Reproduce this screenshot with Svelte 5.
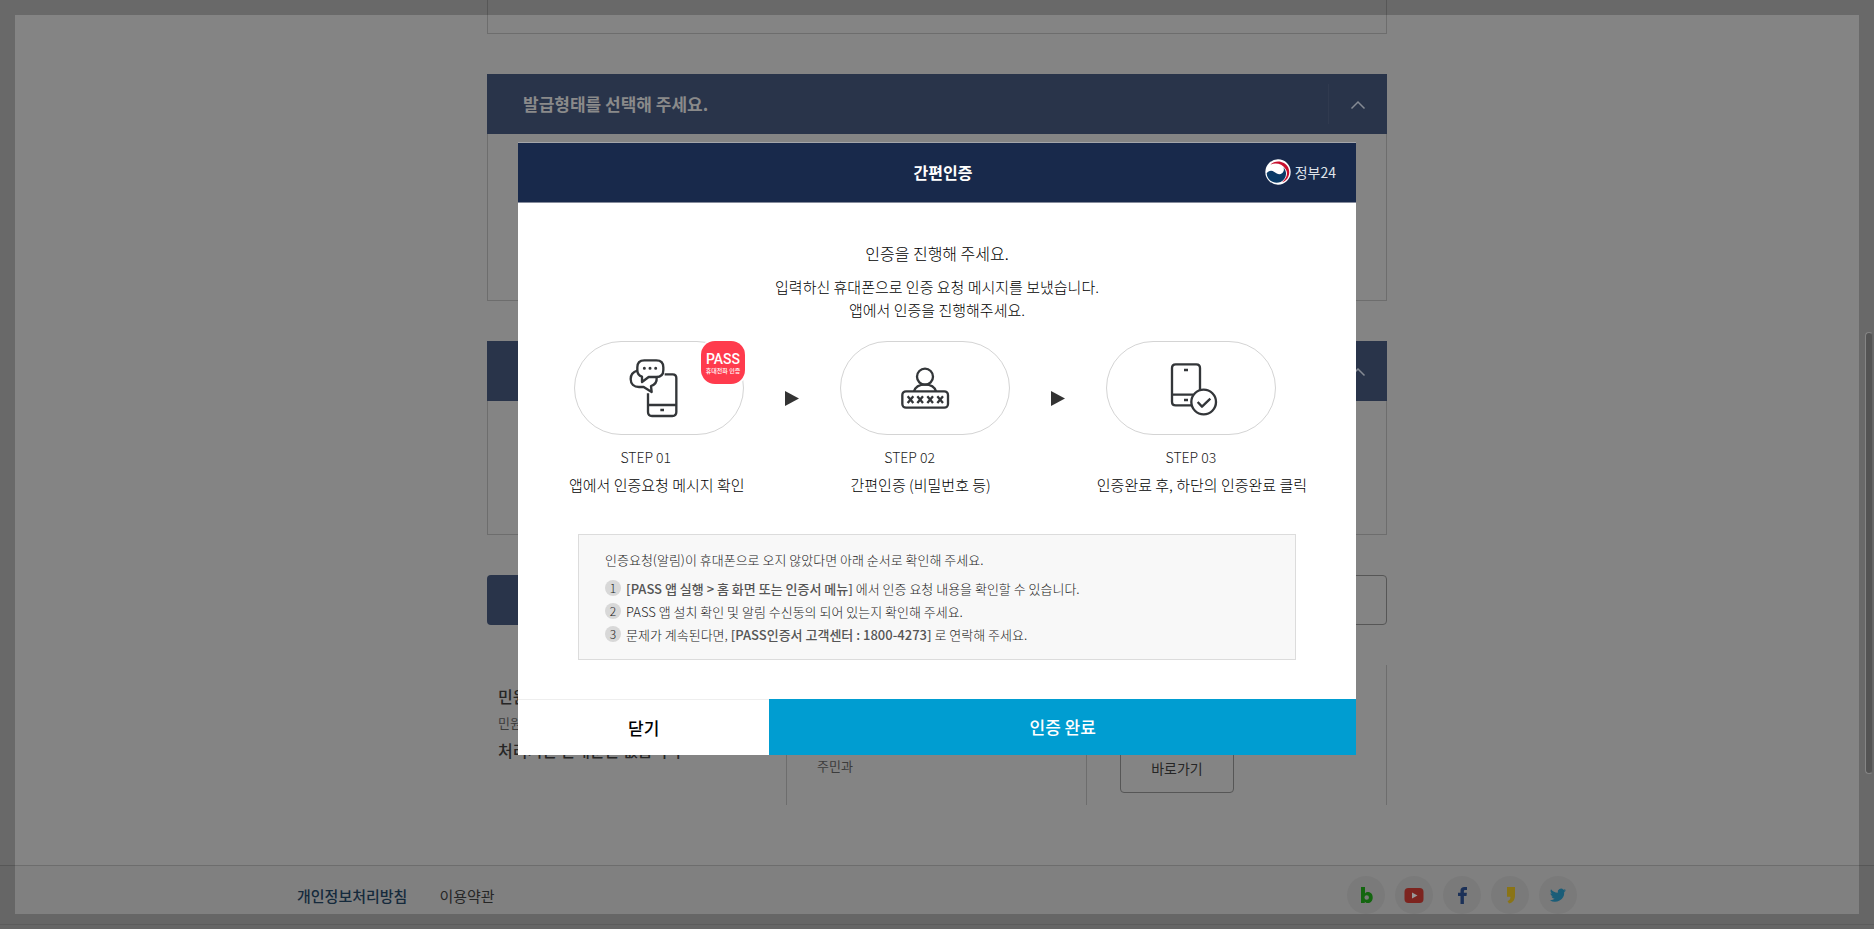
<script>
  const steps = [
    { label: 'STEP 01', text: '앱에서 인증요청 메시지 확인' },
    { label: 'STEP 02', text: '간편인증 (비밀번호 등)' },
    { label: 'STEP 03', text: '인증완료 후, 하단의 인증완료 클릭' }
  ];
  const crosses = [1111, 1140, 1170, 1200];
</script>

<div class="page">
  <main class="content">
    <section class="box first"></section>

    <section>
      <header class="bar">
        <h2>발급형태를 선택해 주세요.</h2>
        <button class="fold" aria-label="접기">
          <svg viewBox="0 0 16 10" width="16" height="10"><path d="M1.5 8.5 8 2l6.5 6.5" /></svg>
        </button>
      </header>
      <div class="box issue"></div>
    </section>

    <section>
      <header class="bar">
        <h2></h2>
        <button class="fold" aria-label="접기">
          <svg viewBox="0 0 16 10" width="16" height="10"><path d="M1.5 8.5 8 2l6.5 6.5" /></svg>
        </button>
      </header>
      <div class="box receive"></div>
    </section>

    <div class="actions">
      <button class="primary" aria-label="신청"></button>
      <button class="plain" aria-label="취소"></button>
    </div>

    <div class="info">
      <div class="col guide">
        <strong>민원신청</strong>
        <span>민원신청 안내</span>
        <strong>처리기관 안내문은 없습니다</strong>
      </div>
      <div class="col dept"><span>주민과</span></div>
      <div class="col link"><button>바로가기</button></div>
    </div>
  </main>

  <footer class="footer">
    <div class="footer-in">
      <nav>
        <a class="privacy" href="#privacy">개인정보처리방침</a>
        <a href="#terms">이용약관</a>
      </nav>
      <div class="social">
        <a href="#blog" aria-label="블로그">
          <svg viewBox="0 0 38 38"><path fill="#13660f" fill-rule="evenodd" d="M14 11h4v6.5c.8-1 1.800-1.400 3-1.400 2.800 0 4.700 2.300 4.700 5.400 0 3.200-2 5.600-4.900 5.600-1.400 0-2.300-.5-3-1.500V27H14ZM19.700 19.300a2.200 2.200 0 1 0 0 4.500 2.200 2.200 0 0 0 0-4.500Z" /></svg>
        </a>
        <a href="#video" aria-label="유튜브">
          <svg viewBox="0 0 38 38"><rect x="9.5" y="12" width="19" height="15" rx="4" fill="#7d241f" /><path fill="#999" d="m17 16.500 5.500 3-5.500 3Z" /></svg>
        </a>
        <a href="#facebook" aria-label="페이스북">
          <svg viewBox="0 0 38 38"><path fill="#1c3158" d="M17.500 28v-8H15v-3.200h2.500v-2c0-2.600 1.500-3.800 3.800-3.800H24v3h-1.700c-1 0-1.400.4-1.400 1.300v1.500h3l-.4 3.200h-2.600v8Z" /></svg>
        </a>
        <a href="#story" aria-label="카카오스토리">
          <svg viewBox="0 0 38 38"><path fill="#8a7416" d="M16 11h8v8c0 4.700-2 7.500-6 8.500L16.500 25c2-.7 3-2 3-4.300H16Z" /></svg>
        </a>
        <a href="#twitter" aria-label="트위터">
          <svg viewBox="0 0 38 38"><path fill="#1a5d78" d="M27 14.200c-.6.300-1.200.4-1.900.5.700-.4 1.200-1 1.400-1.800-.6.400-1.300.6-2.100.8a3.300 3.300 0 0 0-5.600 3c-2.700-.1-5.200-1.400-6.800-3.500-.9 1.500-.4 3.400 1 4.400-.5 0-1-.2-1.500-.4 0 1.600 1.100 2.900 2.600 3.200-.5.100-1 .2-1.500.1.400 1.300 1.600 2.200 3.100 2.300a6.600 6.600 0 0 1-4.900 1.400 9.300 9.300 0 0 0 14.400-8.300c.7-.5 1.300-1 1.800-1.700Z" /></svg>
        </a>
      </div>
    </div>
    <div class="footer-end"></div>
  </footer>
</div>

<div class="frame"></div>
<div class="thumb"></div>

<div class="layer">
  <div class="modal" role="dialog" aria-labelledby="title">
    <header class="head">
      <h1 id="title">간편인증</h1>
      <div class="logo">
        <svg viewBox="0 0 78 78" width="26" height="26">
          <circle cx="39" cy="39" r="38" fill="#fff" />
          <path fill="#c8102e" d="M16 17C31 1 60 5 70 26c8 20-2 38-19 44 16-15 19-29 10-41C52 14 31 9 16 17Z" />
          <path fill="#0b3a66" d="M5 43c5-8 15-10 23-4 8 6 16 10 24 3 5-5 6-11 3-17 14 15 9 36-8 44C27 77 6 64 5 43Z" />
        </svg>
        <span>정부24</span>
      </div>
    </header>

    <div class="body">
      <p class="lead">인증을 진행해 주세요.</p>
      <p class="sub">입력하신 휴대폰으로 인증 요청 메시지를 보냈습니다.<br />앱에서 인증을 진행해주세요.</p>

      <div class="pills">
        <div class="pill">
          <svg class="icon" viewBox="267 112 180 180">
            <path d="M374 161h24q11 0 11 11v102q0 12-12 12h-61q-12 0-12-12v-56M324 253h85M361 268h11" />
            <path d="M292 150c-14 4-20 14-20 25 0 15 10 24 25 24h14l24 15-2-18c13-4 18-14 17-26" />
            <path d="M313 119h36q21 0 21 21v8q0 21-21 21h-23l-20 15v-16q-14-4-14-20v-8q0-21 21-21Z" />
            <path class="dots" d="M313 143h.1M330 143h.1M347 143h.1" />
          </svg>
          <div class="badge">
            <svg viewBox="0 0 44 43">
              <text x="22" y="23" font-size="14" font-weight="500" text-anchor="middle">PASS</text>
              <text x="22" y="32" font-size="6" font-weight="500" text-anchor="middle">휴대전화 인증</text>
            </svg>
          </div>
        </div>
        <svg class="arrow" viewBox="0 0 14 15"><path d="M0 0v15l14-7.500Z" /></svg>
        <div class="pill">
          <svg class="icon" viewBox="1065 112 180 180">
            <circle cx="1155" cy="168" r="24" />
            <path d="M1122 212c4-13 17-20 33-20s29 7 33 20" />
            <rect x="1087" y="212" width="137" height="49" rx="11" />
            {#each crosses as x}
              <path d="M{x - 8} 227l17 20m0-20-17 20" />
            {/each}
          </svg>
        </div>
        <svg class="arrow" viewBox="0 0 14 15"><path d="M0 0v15l14-7.500Z" /></svg>
        <div class="pill">
          <svg class="icon" viewBox="780 112 180 180">
            <path d="M871 254h-47q-11 0-11-11v-101q0-11 11-11h62q11 0 11 11v66M813 222h64M849 148h12M849 238h12" />
            <circle cx="908" cy="244" r="37" />
            <path d="m890 244 13 14 25-24" />
          </svg>
        </div>
      </div>

      <ol class="steps">
        {#each steps as step}
          <li><span class="label">{step.label}</span><span class="text">{step.text}</span></li>
        {/each}
      </ol>

      <div class="notice">
        <p>인증요청(알림)이 휴대폰으로 오지 않았다면 아래 순서로 확인해 주세요.</p>
        <ol>
          <li><i>1</i><span><b>[PASS 앱 실행 &gt; 홈 화면 또는 인증서 메뉴]</b> 에서 인증 요청 내용을 확인할 수 있습니다.</span></li>
          <li><i>2</i><span>PASS 앱 설치 확인 및 알림 수신동의 되어 있는지 확인해 주세요.</span></li>
          <li><i>3</i><span>문제가 계속된다면, <b>[PASS인증서 고객센터 : 1800-4273]</b> 로 연락해 주세요.</span></li>
        </ol>
      </div>
    </div>

    <div class="buttons">
      <button class="close">닫기</button>
      <button class="done">인증 완료</button>
    </div>
  </div>
</div>

<style>
  :global(body) {
    margin: 0;
    overflow: hidden;
    background: #848484;
    font-family: 'Noto Sans CJK KR', sans-serif;
  }
  h1, h2, p, ol { margin: 0; padding: 0; }
  ol { list-style: none; }
  button { font-family: inherit; margin: 0; padding: 0; border: 0; cursor: pointer; }
  a { text-decoration: none; }

  .page { height: 100vh; overflow: hidden; background: #848484; color: #262626; }
  .content { max-width: 900px; margin: 0 auto; }
  .box { box-sizing: border-box; border: 1px solid #6d6d6d; border-top: 0; margin-bottom: 40px; }
  .first { height: 34px; }
  .issue { height: 167px; }
  .receive { height: 134px; }
  .bar {
    display: flex;
    align-items: center;
    justify-content: space-between;
    height: 60px;
    padding-left: 36px;
    background: #29344a;
  }
  h2 { font-size: 17px; line-height: 24px; font-weight: 700; color: #8a8a8a; }
  .fold { width: 59px; height: 40px; border-left: 1px solid #303a4f; background: none; }
  .fold path { fill: none; stroke: #858a94; stroke-width: 1.5; }

  .actions { display: flex; gap: 10px; }
  .actions button { flex: 1; height: 50px; border-radius: 4px; }
  .actions .primary { background: #29344a; }
  .actions .plain { box-sizing: border-box; background: none; border: 1px solid #565656; }

  .info { display: grid; grid-template-columns: repeat(3, 1fr); height: 140px; margin-top: 40px; }
  .col { box-sizing: border-box; border-right: 1px solid #6d6d6d; font-size: 13px; line-height: 24px; color: #3c3c3c; }
  .guide { display: flex; flex-direction: column; gap: 3px; padding: 19px 0 0 11px; }
  .guide strong { font-size: 16px; font-weight: 500; color: #262626; }
  .dept { padding: 89px 0 0 30px; }
  .link { padding: 78px 0 0 33px; }
  .link button {
    width: 114px;
    height: 50px;
    border: 1px solid #565656;
    border-radius: 4px;
    background: none;
    color: #262626;
    font-size: 14px;
  }

  .footer { height: 64px; margin-top: 60px; border-top: 1px solid #6d6d6d; background: #808080; }
  .footer-in { display: flex; align-items: center; justify-content: space-between; max-width: 1280px; height: 58px; margin: 0 auto; }
  nav { display: flex; gap: 32px; font-size: 15px; }
  nav a { color: #262626; }
  nav .privacy { color: #152a3c; font-weight: 500; }
  .social { display: flex; gap: 10px; }
  .social a { width: 38px; height: 38px; border-radius: 50%; background: #7a7a7a; }
  .footer-end { border-top: 1px solid #737373; }

  .frame { position: fixed; inset: 0; border: 15px solid rgba(0, 0, 0, 0.2); }
  .thumb {
    position: fixed;
    top: 332px;
    right: 1px;
    width: 6px;
    height: 440px;
    border: 1px solid #858585;
    border-right-color: #666;
    border-radius: 4px;
    background: #545454;
  }

  .layer { position: fixed; inset: 0; display: flex; align-items: center; justify-content: center; padding: 0 20px 33px; }
  .modal { width: 838px; background: #fff; }
  .head {
    position: relative;
    display: flex;
    align-items: center;
    justify-content: center;
    height: 59px;
    padding-left: 12px;
    border-top: 1px solid #a3a5aa;
    border-bottom: 1px solid #868c9c;
    background: #18294b;
    color: #fff;
  }
  h1 { font-size: 16px; line-height: 24px; font-weight: 700; }
  .logo { position: absolute; right: 20px; display: flex; align-items: center; gap: 4px; font-size: 14px; line-height: 26px; color: #dfe3ea; }

  .body { padding: 38px 56px 39px; color: #000; }
  .lead, .sub { text-align: center; font-weight: 300; }
  .lead { font-size: 16px; line-height: 24px; }
  .sub { margin-top: 10px; font-size: 15px; line-height: 23px; }

  .pills { display: flex; align-items: center; gap: 41px; margin-top: 20px; }
  .pill {
    position: relative;
    box-sizing: border-box;
    display: flex;
    align-items: center;
    justify-content: center;
    width: 170px;
    height: 94px;
    border: 1px solid #d4d4d4;
    border-radius: 47px;
  }
  .icon { width: 60px; height: 60px; fill: none; stroke: #333639; stroke-width: 7; stroke-linejoin: round; stroke-linecap: butt; }
  .dots { stroke-width: 9; stroke-linecap: round; }
  .arrow { width: 14px; height: 15px; margin-top: 22px; fill: #333; }
  .badge {
    position: absolute;
    top: -1px;
    right: -2px;
    width: 44px;
    height: 43px;
    border-radius: 14px;
    background: #ff3b4d;
    box-shadow: 0 0 0 2px #fff;
  }
  .badge svg { display: block; fill: #fff; font-family: Roboto, 'Noto Sans CJK KR', sans-serif; }

  .steps { display: flex; justify-content: center; gap: 106px; margin: 10px -20px 0; padding-left: 2px; white-space: nowrap; }
  .steps li { display: flex; flex-direction: column; gap: 4px; text-align: center; line-height: 24px; }
  .label { padding-right: 22px; font-size: 14px; font-weight: 300; color: #222; }
  .text { font-size: 15px; font-weight: 300; color: #000; }

  .notice {
    margin: 37px 4px 0;
    padding: 13px 26px;
    border: 1px solid #dcdcdc;
    background: #f8f8f8;
    color: #222;
    font-size: 13px;
    font-weight: 300;
  }
  .notice p { line-height: 24px; }
  .notice ol { margin-top: 5px; }
  .notice li { display: flex; align-items: center; gap: 5px; line-height: 23px; }
  .notice b { font-weight: 500; color: #555; }
  .notice i { width: 16px; height: 16px; border-radius: 50%; background: #d8d8d8; font-style: normal; font-size: 12px; line-height: 16px; text-align: center; }

  .buttons { display: flex; height: 56px; }
  .buttons button { font-size: 17px; font-weight: 500; }
  .close { width: 30%; border-top: 1px solid #eee; background: #fff; color: #000; }
  .done { flex: 1; background: #009dd1; color: #fff; }
</style>
